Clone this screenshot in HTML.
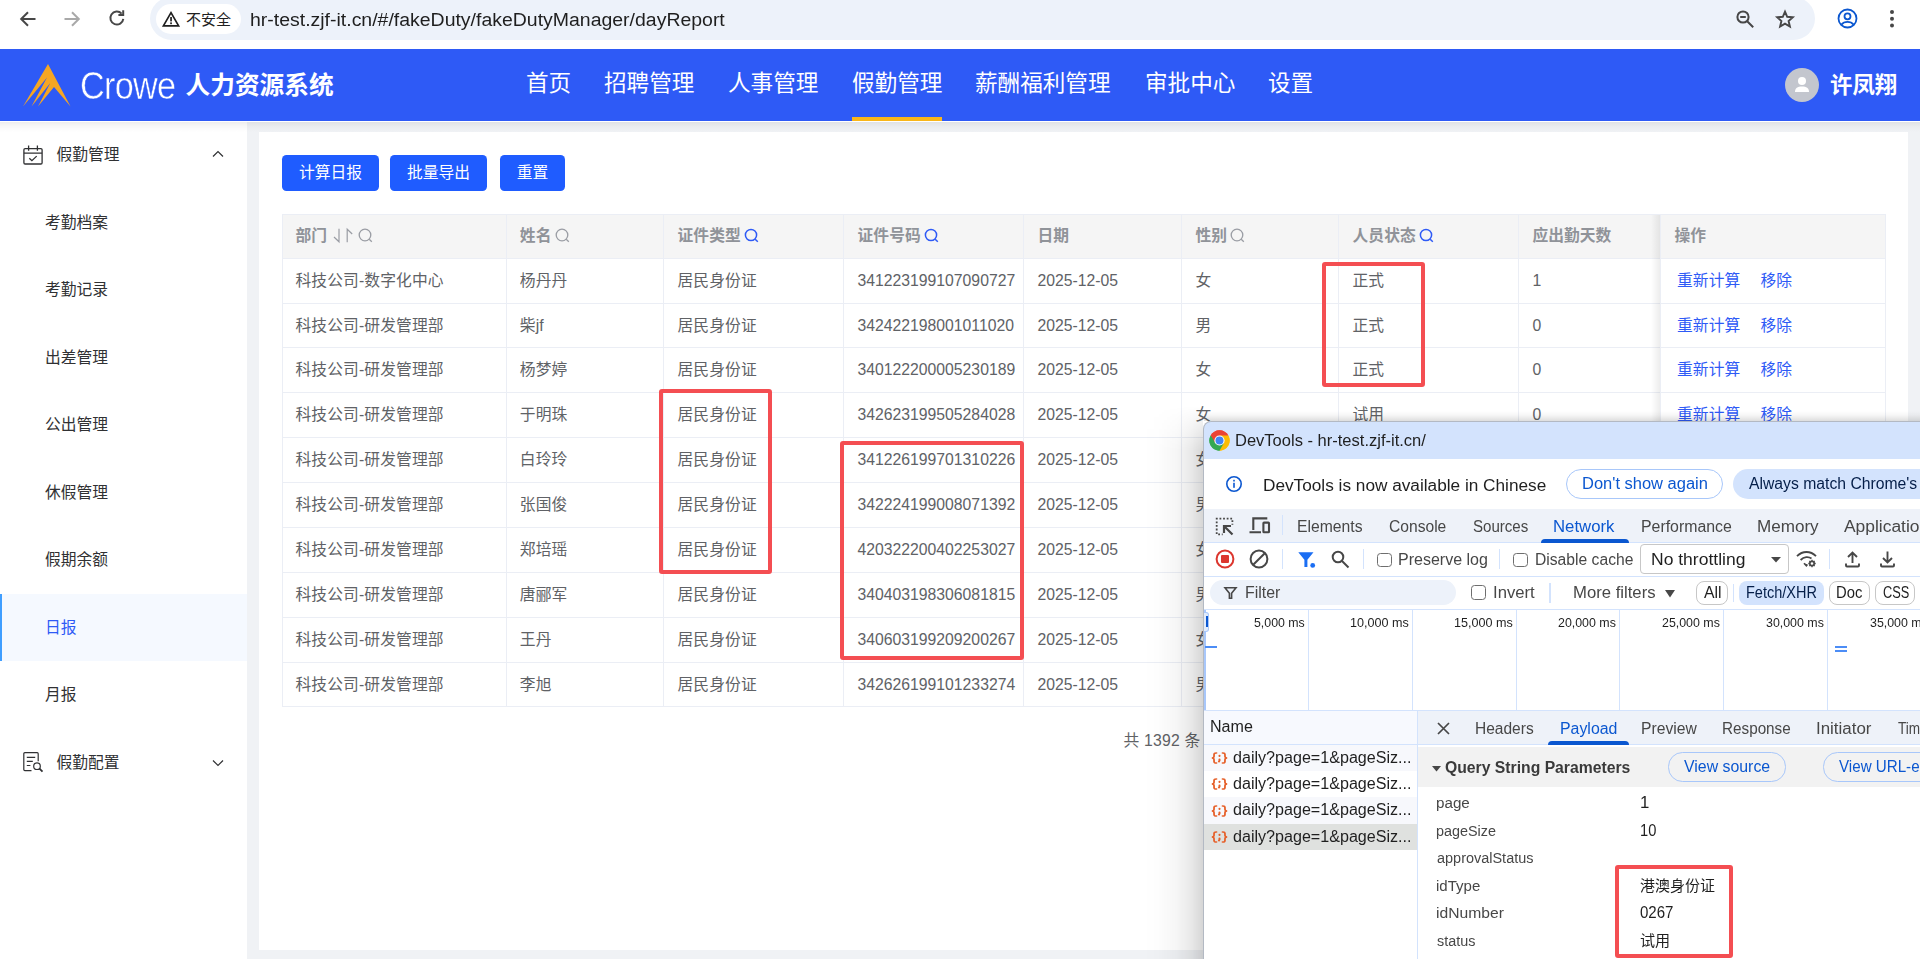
<!DOCTYPE html>
<html lang="zh-CN">
<head>
<meta charset="utf-8">
<title>人力资源系统</title>
<style>
*{box-sizing:border-box;margin:0;padding:0}
html,body{width:1920px;height:959px;overflow:hidden;background:#f0f2f5}
body{position:relative;font-family:"Liberation Sans","Noto Sans CJK SC",sans-serif;color:#303133}
.abs{position:absolute}
svg{display:block;overflow:visible}

/* ---------- browser toolbar ---------- */
#chrome{position:absolute;left:0;top:0;width:1920px;height:49px;background:#fff}
#omni{position:absolute;left:150px;top:-3px;width:1665px;height:43px;border-radius:22px;background:#edf2fa}
#chip{position:absolute;left:156px;top:4px;width:85px;height:30px;border-radius:15px;background:#fff}
#chip span{position:absolute;left:30px;top:0;line-height:31px;font-size:15px;color:#1f1f1f;letter-spacing:0}
#url{position:absolute;left:250px;top:0;line-height:40px;font-size:17.6px;color:#1f1f1f;white-space:nowrap;transform:scaleX(1.106);transform-origin:0 50%}

/* ---------- app header ---------- */
#hdr{position:absolute;left:0;top:49px;width:1920px;height:72px;background:#2e5af6;color:#fff}
#crowe{position:absolute;left:79.5px;top:0;line-height:74px;font-size:38px;letter-spacing:-0.8px;font-weight:400;-webkit-text-stroke:0.5px #2e5af6;transform:scaleX(.9);transform-origin:0 50%}
#sysname{position:absolute;left:185.5px;top:0;line-height:74px;font-size:24.7px;font-weight:700;white-space:nowrap}
.nav{position:absolute;top:0;line-height:70px;font-size:22.6px;white-space:nowrap}
#navline{position:absolute;left:852px;top:68px;width:90px;height:4px;background:#f9b619}
#avatar{position:absolute;left:1785px;top:19px;width:34px;height:34px;border-radius:50%;background:#c3c6ce}
#uname{position:absolute;left:1830px;top:0;line-height:73px;font-size:22.4px;font-weight:700;white-space:nowrap}

/* ---------- sidebar ---------- */
#side{position:absolute;left:0;top:121px;width:247px;height:838px;background:#fff}
.mi{position:absolute;left:0;width:247px;height:67.5px;line-height:67.5px;font-size:15.75px;color:#303133;white-space:nowrap}
.mi.sub{padding-left:45px}
.mi.top{padding-left:56.5px}
.mi.act{background:#f5f9ff;color:#2e5af6;border-left:2px solid #409eff;padding-left:43px}

/* ---------- card + table ---------- */
#card{position:absolute;left:258.75px;top:132.25px;width:1649.5px;height:817.5px;background:#fff}
.btn{position:absolute;top:155px;height:36px;border-radius:4.5px;background:#1f5cff;color:#fff;font-size:15.75px;line-height:36px;text-align:center;white-space:nowrap}
#tbl{position:absolute;left:282px;top:214px;width:1604px;height:493px;border:1px solid #ebeef5;font-size:15.75px;color:#606266}
.tr{position:absolute;left:0;width:1602px;height:44.75px;border-bottom:1px solid #ebeef5;background:#fff}
.tr.th{height:43.75px;background:#f5f5f5;color:#909399;font-weight:700}
.td{letter-spacing:.12px;position:absolute;top:0;height:100%;border-right:1px solid #ebeef5;padding-left:13.5px;line-height:44.5px;white-space:nowrap;overflow:hidden}
.c1{left:0;width:224px;padding-left:12.5px}.c2{left:224px;width:157px;padding-left:12.8px}.c3{left:381px;width:180px}.c4{left:561px;width:180px}
.c5{left:741px;width:158px}.c6{left:899px;width:157px}.c7{left:1056px;width:180px}.c8{left:1236px;width:142px}
.c9{left:1378px;width:224px;border-right:none;padding-left:16px}
.c9 b{font-weight:400;color:#2e5af6;margin-right:20px}
.tr.th .c9{padding-left:13.5px}
.num,.c8{letter-spacing:0;line-height:43px}
.tr.th .td{line-height:41.5px}
#fixsh{position:absolute;left:1651px;top:215px;width:9px;height:491px;background:linear-gradient(to right,rgba(0,0,0,0),rgba(0,0,0,.07))}
.ico{display:inline-block;vertical-align:-2px;margin-left:3px}
#total{position:absolute;left:1123.5px;top:730px;letter-spacing:.2px;font-size:15.75px;color:#606266;line-height:22px;white-space:nowrap}
.red{position:absolute;border:4.5px solid #f44e52;border-radius:3px}

/* ---------- devtools ---------- */
#dtshadow{position:absolute;left:1143px;top:406px;width:60px;height:553px;background:linear-gradient(to right,rgba(0,0,0,0),rgba(0,0,0,.008) 25%,rgba(0,0,0,.035) 55%,rgba(0,0,0,.085) 80%,rgba(0,0,0,.16));-webkit-mask-image:linear-gradient(to bottom,transparent,#000 45px);mask-image:linear-gradient(to bottom,transparent,#000 45px)}
#dtshadow2{position:absolute;left:1204px;top:411px;width:716px;height:10px;background:linear-gradient(to bottom,rgba(0,0,0,0),rgba(0,0,0,.03) 40%,rgba(0,0,0,.13))}
#dt{position:absolute;left:1203px;top:421px;width:717px;height:538px;border-top-left-radius:8px;overflow:hidden;background:#b3b9c3}
#dti{position:absolute;left:1px;top:0;width:716px;height:538px}
#dt .b{position:absolute}
#dtx .t{position:absolute;white-space:nowrap;line-height:20px;transform-origin:0 50%}
.cb{position:absolute;width:14.5px;height:14.5px;border:1.5px solid #6e6e6e;border-radius:3.5px;background:#fff}
.tick{position:absolute;top:610px;width:1px;height:100px;background:#d3e3fd}
.rq{left:1209.5px}
</style>
</head>
<body>

<!-- ================= BROWSER TOOLBAR ================= -->
<div id="chrome">
  <svg class="abs" style="left:18px;top:9px" width="20" height="20" viewBox="0 0 20 20" fill="none" stroke="#474747" stroke-width="2"><path d="M17.5 10H3.5M10 3.2L3.2 10l6.8 6.8"/></svg>
  <svg class="abs" style="left:62px;top:9px" width="20" height="20" viewBox="0 0 20 20" fill="none" stroke="#a9a9a9" stroke-width="2"><path d="M2.5 10h14M10 3.2l6.8 6.8-6.8 6.8"/></svg>
  <svg class="abs" style="left:107px;top:8px" width="20" height="20" viewBox="0 0 20 20" fill="none" stroke="#474747" stroke-width="2"><path d="M16.300 10.800a6.500 6.500 0 1 1-1.700-5.200"/><path d="M16.200 2.200v4.800h-4.800"/></svg>
  <div id="omni"></div>
  <div id="chip">
    <svg class="abs" style="left:6px;top:7px" width="18" height="16" viewBox="0 0 18 16"><path d="M9 1.6L16.6 14.8H1.4z" fill="none" stroke="#1f1f1f" stroke-width="1.7" stroke-linejoin="miter"/><rect x="8.2" y="6" width="1.7" height="4.4" fill="#1f1f1f"/><rect x="8.2" y="11.4" width="1.7" height="1.8" fill="#1f1f1f"/></svg>
    <span>不安全</span>
  </div>
  <div id="url">hr-test.zjf-it.cn/#/fakeDuty/fakeDutyManager/dayReport</div>
  <svg class="abs" style="left:1735px;top:9px" width="20" height="20" viewBox="0 0 20 20" fill="none" stroke="#474747" stroke-width="2"><circle cx="8" cy="8" r="5.6"/><path d="M12.2 12.2l6 6M5.2 8h5.6"/></svg>
  <svg class="abs" style="left:1775px;top:9px" width="20" height="20" viewBox="0 0 20 20" fill="none" stroke="#474747" stroke-width="1.9" stroke-linejoin="miter"><path d="M10 2.6l2.2 5.2 5.6.5-4.2 3.7 1.3 5.5L10 14.6l-4.9 2.9 1.3-5.5-4.2-3.7 5.6-.5z"/></svg>
  <svg class="abs" style="left:1837px;top:8px" width="21" height="21" viewBox="0 0 21 21" fill="none" stroke="#0b57d0" stroke-width="1.8"><circle cx="10.5" cy="10.5" r="9"/><circle cx="10.5" cy="8.3" r="3"/><path d="M4.4 16.6c1.6-2 3.7-2.7 6.1-2.7s4.5.7 6.1 2.7"/></svg>
  <svg class="abs" style="left:1889px;top:9px" width="6" height="20" viewBox="0 0 6 20" fill="#474747"><circle cx="3" cy="3" r="2"/><circle cx="3" cy="9.7" r="2"/><circle cx="3" cy="16.4" r="2"/></svg>
</div>

<!-- ================= APP HEADER ================= -->
<div id="hdr">
  <svg class="abs" style="left:22px;top:14px" width="50" height="45" viewBox="0 0 50 45"><path d="M26 1L1 43.500 25 14.500 9.500 43.500 28.300 20 16 43.500 32 24 48.500 43.500z" fill="#f5a623"/></svg>
  <div id="crowe">Crowe</div>
  <div id="sysname">人力资源系统</div>
  <div class="nav" style="left:526px">首页</div>
  <div class="nav" style="left:604px">招聘管理</div>
  <div class="nav" style="left:728px">人事管理</div>
  <div class="nav" style="left:852px">假勤管理</div>
  <div class="nav" style="left:975px">薪酬福利管理</div>
  <div class="nav" style="left:1145px">审批中心</div>
  <div class="nav" style="left:1268px">设置</div>
  <div id="navline"></div>
  <div id="avatar"><svg class="abs" style="left:9px;top:8px" width="16" height="17" viewBox="0 0 16 17" fill="#fff"><circle cx="8" cy="5" r="4"/><path d="M1 16c0-4 2.5-5.5 7-5.5s7 1.500 7 5.500z"/></svg></div>
  <div id="uname">许凤翔</div>
</div>

<!-- ================= SIDEBAR ================= -->
<div id="side">
  <div class="mi top" style="top:0"><svg class="abs" style="left:23px;top:24px" width="20" height="20" viewBox="0 0 20 20" fill="none" stroke="#303133" stroke-width="1.3"><rect x="0.9" y="3.6" width="18.2" height="15.4" rx="1.2"/><path d="M0.9 8.200h18.2M5.600 0.500v5.200M14.400 0.500v5.200M6.300 13.200l2.600 2.500 4.800-4.600"/></svg>假勤管理<svg class="abs" style="left:212px;top:29px" width="12" height="8" viewBox="0 0 12 8" fill="none" stroke="#303133" stroke-width="1.2"><path d="M1 6.500L6 1.500l5 5"/></svg></div>
  <div class="mi sub" style="top:67.5px">考勤档案</div>
  <div class="mi sub" style="top:135px">考勤记录</div>
  <div class="mi sub" style="top:202.5px">出差管理</div>
  <div class="mi sub" style="top:270px">公出管理</div>
  <div class="mi sub" style="top:337.5px">休假管理</div>
  <div class="mi sub" style="top:405px">假期余额</div>
  <div class="mi sub act" style="top:472.5px">日报</div>
  <div class="mi sub" style="top:540px">月报</div>
  <div class="mi top" style="top:607.5px"><svg class="abs" style="left:23px;top:23px" width="21" height="21" viewBox="0 0 21 21" fill="none" stroke="#303133" stroke-width="1.2"><path d="M8.500 18.600H1.800a1 1 0 0 1-1-1V1.700a1 1 0 0 1 1-1h12.400a1 1 0 0 1 1 1v7.500M3.800 5.300h8.400M3.800 9.400h6M3.800 13.500h3.600"/><circle cx="14" cy="14.200" r="3.300"/><path d="M16.500 16.700l3 3" stroke-width="1.8"/></svg>假勤配置<svg class="abs" style="left:212px;top:30px" width="12" height="8" viewBox="0 0 12 8" fill="none" stroke="#303133" stroke-width="1.2"><path d="M1 1.500l5 5 5-5"/></svg></div>
</div>

<div class="abs" style="left:0;top:121px;width:1920px;height:1px;background:#fff"></div>
<div class="abs" style="left:0;top:122px;width:1920px;height:10px;background:linear-gradient(to bottom,rgba(0,0,0,.065),rgba(0,0,0,.026) 45%,rgba(0,0,0,0))"></div>
<!-- ================= CARD ================= -->
<div id="card"></div>
<div class="btn" style="left:282px;width:97px">计算日报</div>
<div class="btn" style="left:390px;width:97px">批量导出</div>
<div class="btn" style="left:500px;width:65px">重置</div>

<div id="tbl">
  <div class="tr th" style="top:0"><div class="td c1">部门<svg class="ico" style="margin-left:6px;margin-right:2px" width="20" height="15" viewBox="0 0 20 15" fill="none" stroke="#9a9da4" stroke-width="1.2"><path d="M6 0.800v13L1 9M14.200 14.200V1.200l5 4.800"/></svg><svg class="ico" width="15" height="15" viewBox="0 0 15 15" fill="none" stroke="#9a9da4" stroke-width="1.3"><circle cx="7" cy="7" r="5.8"/><path d="M11.2 11.2l2.6 2.6"/></svg></div><div class="td c2">姓名<svg class="ico" width="15" height="15" viewBox="0 0 15 15" fill="none" stroke="#9a9da4" stroke-width="1.3"><circle cx="7" cy="7" r="5.8"/><path d="M11.2 11.2l2.6 2.6"/></svg></div><div class="td c3">证件类型<svg class="ico" width="15" height="15" viewBox="0 0 15 15" fill="none" stroke="#2e5af6" stroke-width="1.5"><circle cx="7" cy="7" r="5.6"/><path d="M11.2 11.2l2.6 2.6"/></svg></div><div class="td c4">证件号码<svg class="ico" width="15" height="15" viewBox="0 0 15 15" fill="none" stroke="#2e5af6" stroke-width="1.5"><circle cx="7" cy="7" r="5.6"/><path d="M11.2 11.2l2.6 2.6"/></svg></div><div class="td c5">日期</div><div class="td c6">性别<svg class="ico" width="15" height="15" viewBox="0 0 15 15" fill="none" stroke="#9a9da4" stroke-width="1.3"><circle cx="7" cy="7" r="5.8"/><path d="M11.2 11.2l2.6 2.6"/></svg></div><div class="td c7">人员状态<svg class="ico" width="15" height="15" viewBox="0 0 15 15" fill="none" stroke="#2e5af6" stroke-width="1.5"><circle cx="7" cy="7" r="5.6"/><path d="M11.2 11.2l2.6 2.6"/></svg></div><div class="td c8">应出勤天数</div><div class="td c9">操作</div></div>
  <div class="tr" style="top:44px;height:45px"><div class="td c1">科技公司-数字化中心</div><div class="td c2">杨丹丹</div><div class="td c3">居民身份证</div><div class="td c4 num">341223199107090727</div><div class="td c5 num">2025-12-05</div><div class="td c6">女</div><div class="td c7">正式</div><div class="td c8">1</div><div class="td c9"><b>重新计算</b><b>移除</b></div></div>
  <div class="tr" style="top:89px;height:44px"><div class="td c1">科技公司-研发管理部</div><div class="td c2">柴jf</div><div class="td c3">居民身份证</div><div class="td c4 num">342422198001011020</div><div class="td c5 num">2025-12-05</div><div class="td c6">男</div><div class="td c7">正式</div><div class="td c8">0</div><div class="td c9"><b>重新计算</b><b>移除</b></div></div>
  <div class="tr" style="top:133px;height:45px"><div class="td c1">科技公司-研发管理部</div><div class="td c2">杨梦婷</div><div class="td c3">居民身份证</div><div class="td c4 num">340122200005230189</div><div class="td c5 num">2025-12-05</div><div class="td c6">女</div><div class="td c7">正式</div><div class="td c8">0</div><div class="td c9"><b>重新计算</b><b>移除</b></div></div>
  <div class="tr" style="top:178px;height:45px"><div class="td c1">科技公司-研发管理部</div><div class="td c2">于明珠</div><div class="td c3">居民身份证</div><div class="td c4 num">342623199505284028</div><div class="td c5 num">2025-12-05</div><div class="td c6">女</div><div class="td c7">试用</div><div class="td c8">0</div><div class="td c9"><b>重新计算</b><b>移除</b></div></div>
  <div class="tr" style="top:223px;height:45px"><div class="td c1">科技公司-研发管理部</div><div class="td c2">白玲玲</div><div class="td c3">居民身份证</div><div class="td c4 num">341226199701310226</div><div class="td c5 num">2025-12-05</div><div class="td c6">女</div><div class="td c7">试用</div><div class="td c8">0</div><div class="td c9"><b>重新计算</b><b>移除</b></div></div>
  <div class="tr" style="top:268px;height:45px"><div class="td c1">科技公司-研发管理部</div><div class="td c2">张国俊</div><div class="td c3">居民身份证</div><div class="td c4 num">342224199008071392</div><div class="td c5 num">2025-12-05</div><div class="td c6">男</div><div class="td c7">试用</div><div class="td c8">0</div><div class="td c9"><b>重新计算</b><b>移除</b></div></div>
  <div class="tr" style="top:313px;height:45px"><div class="td c1">科技公司-研发管理部</div><div class="td c2">郑培瑶</div><div class="td c3">居民身份证</div><div class="td c4 num">420322200402253027</div><div class="td c5 num">2025-12-05</div><div class="td c6">女</div><div class="td c7">试用</div><div class="td c8">0</div><div class="td c9"><b>重新计算</b><b>移除</b></div></div>
  <div class="tr" style="top:358px;height:45px"><div class="td c1">科技公司-研发管理部</div><div class="td c2">唐郦军</div><div class="td c3">居民身份证</div><div class="td c4 num">340403198306081815</div><div class="td c5 num">2025-12-05</div><div class="td c6">男</div><div class="td c7">试用</div><div class="td c8">0</div><div class="td c9"><b>重新计算</b><b>移除</b></div></div>
  <div class="tr" style="top:403px;height:45px"><div class="td c1">科技公司-研发管理部</div><div class="td c2">王丹</div><div class="td c3">居民身份证</div><div class="td c4 num">340603199209200267</div><div class="td c5 num">2025-12-05</div><div class="td c6">女</div><div class="td c7">试用</div><div class="td c8">0</div><div class="td c9"><b>重新计算</b><b>移除</b></div></div>
  <div class="tr" style="top:448px;height:43px;border-bottom:none"><div class="td c1">科技公司-研发管理部</div><div class="td c2">李旭</div><div class="td c3">居民身份证</div><div class="td c4 num">342626199101233274</div><div class="td c5 num">2025-12-05</div><div class="td c6">男</div><div class="td c7">试用</div><div class="td c8">0</div><div class="td c9"><b>重新计算</b><b>移除</b></div></div>
</div>

<div id="fixsh"></div>
<div id="total">共 1392 条</div>

<!-- ================= RED ANNOTATIONS ================= -->
<div class="red" style="left:1322px;top:262px;width:103px;height:125px"></div>
<div class="red" style="left:659px;top:389px;width:113px;height:185px"></div>
<div class="red" style="left:840px;top:441px;width:184px;height:219px"></div>

<!-- DT-BEGIN -->
<!-- ================= DEVTOOLS WINDOW ================= -->
<div id="dtshadow"></div><div id="dtshadow2"></div>
<div id="dt"><div id="dti">
  <div class="b" style="left:0;top:1px;width:716px;height:37px;background:#d3e3fd;border-top-left-radius:7px"></div>
  <div class="b" style="left:0;top:38px;width:716px;height:50px;background:#fff"></div>
  <div class="b" style="left:0;top:88px;width:716px;height:34px;background:#eef2f9;border-bottom:1px solid #d3e3fd"></div>
  <div class="b" style="left:0;top:122px;width:716px;height:34px;background:#fff;border-bottom:1px solid #d3e3fd"></div>
  <div class="b" style="left:0;top:156px;width:716px;height:33px;background:#fff;border-bottom:1px solid #d3e3fd"></div>
  <div class="b" style="left:0;top:189px;width:716px;height:101px;background:#fff;border-bottom:1px solid #d3e3fd"></div>
  <div class="b" style="left:0;top:290px;width:213px;height:34px;background:#f7f9fe;border-bottom:1px solid #d3e3fd"></div>
  <div class="b" style="left:214px;top:290px;width:502px;height:34px;background:#eef2f9;border-bottom:1px solid #d3e3fd"></div>
  <div class="b" style="left:0;top:324px;width:213px;height:214px;background:#fff"></div>
  <div class="b" style="left:0;top:324px;width:213px;height:26.200px;background:#f7f8fc"></div>
  <div class="b" style="left:0;top:376.400px;width:213px;height:26.200px;background:#f7f8fc"></div>
  <div class="b" style="left:0;top:402.600px;width:213px;height:26.400px;background:#dfe1df"></div>
  <div class="b" style="left:213px;top:290px;width:1px;height:248px;background:#d3e3fd"></div>
  <div class="b" style="left:214px;top:324px;width:502px;height:214px;background:#fff"></div>
  <div class="b" style="left:214px;top:326px;width:502px;height:40px;background:#f2f2f2"></div>
</div></div>
<div id="dtx">
  <!-- chrome logo -->
  <svg class="abs" style="left:1208.500px;top:429.500px" width="21" height="21" viewBox="-10.500 -10.500 21 21"><circle r="10.200" fill="#fff"/><path d="M0 0L-8.830 -5.100A10.200 10.200 0 0 1 8.830 -5.100z" fill="#ea4335"/><path d="M0 0L8.830 -5.100A10.200 10.200 0 0 1 0 10.200z" fill="#fbbc04"/><path d="M0 0L0 10.200A10.200 10.200 0 0 1 -8.830 -5.100z" fill="#34a853"/><path d="M-8.830 -5.100L-4.400 2.600 0 0zM8.830 -5.100H0v5.100zM0 10.200l4.400-7.600L0 0z" fill="none"/><path d="M0 -5.100H8.830A10.200 10.200 0 0 0 -8.830 -5.100L-4.420 2.550z" fill="#ea4335"/><path d="M4.420 2.550L0 10.200A10.200 10.200 0 0 0 8.830 -5.100H0z" fill="#fbbc04"/><path d="M-4.420 2.550L-8.830 -5.100A10.200 10.200 0 0 0 0 10.200L4.420 2.550z" fill="#34a853"/><circle r="5.100" fill="#fff"/><circle r="4" fill="#4285f4"/></svg>
  <!-- info icon -->
  <svg class="abs" style="left:1225px;top:475px" width="18" height="18" viewBox="0 0 18 18"><circle cx="9" cy="9" r="7.200" fill="none" stroke="#0b57d0" stroke-width="1.600"/><rect x="8.200" y="7.800" width="1.600" height="5" fill="#0b57d0"/><rect x="8.200" y="4.800" width="1.600" height="1.700" fill="#0b57d0"/></svg>
  <div class="abs" style="left:1566px;top:469px;width:157px;height:30px;border:1px solid #a8c7fa;border-radius:15px"></div>
  <div class="abs" style="left:1733px;top:469px;width:200px;height:30px;background:#d3e3fd;border-radius:15px"></div>
  <!-- inspect icon -->
  <svg class="abs" style="left:1215px;top:516.500px" width="20" height="19" viewBox="0 0 20 19" fill="none" stroke="#474747" stroke-width="1.800" stroke-linejoin="miter"><path d="M0.900 1.700h16.500v6M1.700 0.800v16.500h6" stroke-dasharray="1.800 1.800"/><path d="M9 9l8.500 8.500M9 16V9h7" stroke-width="2.200"/></svg>
  <!-- device icon -->
  <svg class="abs" style="left:1249px;top:517px" width="22" height="17" viewBox="0 0 22 17" fill="none" stroke="#474747" stroke-width="2.100"><path d="M4.300 13V1.400h14M0.500 15.300h11.500"/><rect x="14.400" y="5.600" width="5.600" height="9.700" rx="0.600"/></svg>
  <div class="abs" style="left:1282px;top:515px;width:1px;height:20px;background:#d3e3fd"></div>
  <!-- active tab underline -->
  <div class="abs" style="left:1541px;top:539px;width:88px;height:4px;background:#0b57d0;border-radius:4px 4px 0 0"></div>
  <!-- record -->
  <svg class="abs" style="left:1214.600px;top:549px" width="20" height="20" viewBox="0 0 20 20"><circle cx="10" cy="10" r="8.400" fill="none" stroke="#dc362e" stroke-width="2"/><rect x="6" y="6" width="8" height="8" rx="1" fill="#dc362e"/></svg>
  <!-- clear -->
  <svg class="abs" style="left:1249.200px;top:549px" width="20" height="20" viewBox="0 0 20 20" fill="none" stroke="#474747" stroke-width="2"><circle cx="10" cy="10" r="8.400"/><path d="M4.200 15.800L15.800 4.200"/></svg>
  <div class="abs" style="left:1282px;top:549px;width:1px;height:20px;background:#d3e3fd"></div>
  <!-- filter filled -->
  <svg class="abs" style="left:1297.500px;top:551.800px" width="19" height="17" viewBox="0 0 19 17"><path d="M0.300 0.300h15.200L9.400 7.800v7.200H6.400V7.800z" fill="#1b6ef3"/><circle cx="14.700" cy="13.400" r="2.400" fill="#1b6ef3"/></svg>
  <!-- search -->
  <svg class="abs" style="left:1331px;top:550px" width="19" height="19" viewBox="0 0 19 19" fill="none" stroke="#474747" stroke-width="2"><circle cx="7" cy="7" r="5.300"/><path d="M11 11l6.500 6.500"/></svg>
  <div class="abs" style="left:1363px;top:549px;width:1px;height:20px;background:#d3e3fd"></div>
  <div class="cb" style="left:1377px;top:552.500px"></div>
  <div class="abs" style="left:1499px;top:549px;width:1px;height:20px;background:#d3e3fd"></div>
  <div class="cb" style="left:1513px;top:552.500px"></div>
  <!-- throttle select -->
  <div class="abs" style="left:1640px;top:544px;width:149px;height:30px;border:1px solid #c7c7c7;border-radius:4px;background:#fff"></div>
  <svg class="abs" style="left:1771px;top:557px" width="10" height="6" viewBox="0 0 10 6"><path d="M0 0h10L5 5.500z" fill="#474747"/></svg>
  <!-- wifi settings -->
  <svg class="abs" style="left:1796px;top:550px" width="22" height="18" viewBox="0 0 22 18" fill="none" stroke="#474747" stroke-width="1.800"><path d="M1 6.200C6.500 0.600 14.500 0.600 20 6.200M4.600 10C8 6.500 12.600 6.400 15.500 8.500"/><path d="M8 13.200l2.400 2.600 1-1.200" stroke-width="1.600" fill="#474747"/><circle cx="16" cy="13.500" r="2.200" stroke-width="1.700"/><path d="M16 9.800v1.200M16 16v1.200M12.300 13.500h1.200M18.500 13.500h1.200M13.400 10.900l.9.900M17.700 15.200l.9.900M18.600 10.900l-.9.900M14.300 15.200l-.9.900" stroke-width="1.300"/></svg>
  <div class="abs" style="left:1829px;top:549px;width:1px;height:20px;background:#d3e3fd"></div>
  <!-- upload / download -->
  <svg class="abs" style="left:1845px;top:550.500px" width="15" height="16.500" viewBox="0 0 15 16.500" fill="none" stroke="#474747" stroke-width="1.900"><path d="M7.500 12V1.500M3 6l4.500-4.500L12 6M1 12.500v2a1 1 0 0 0 1 1h11a1 1 0 0 0 1-1v-2"/></svg>
  <svg class="abs" style="left:1880px;top:550.500px" width="15" height="16.500" viewBox="0 0 15 16.500" fill="none" stroke="#474747" stroke-width="1.900"><path d="M7.500 0.500V11.500M3 7l4.500 4.500L12 7M1 12.500v2a1 1 0 0 0 1 1h11a1 1 0 0 0 1-1v-2"/></svg>
  <!-- filter row -->
  <div class="abs" style="left:1210px;top:580px;width:246px;height:25px;background:#edf2fa;border-radius:12.500px"></div>
  <svg class="abs" style="left:1223.500px;top:587px" width="13" height="12" viewBox="0 0 13 12" fill="none" stroke="#474747" stroke-width="1.600"><path d="M1 0.800h11L7.600 6.300v5H5.400v-5z"/></svg>
  <div class="cb" style="left:1471px;top:585px"></div>
  <div class="abs" style="left:1549px;top:583px;width:2px;height:20px;background:#d3e3fd"></div>
  <svg class="abs" style="left:1664.500px;top:589.500px" width="10" height="8" viewBox="0 0 10 8"><path d="M0 0h10L5 7.500z" fill="#474747"/></svg>
  <div class="abs" style="left:1696px;top:581px;width:32px;height:24px;border:1px solid #c7c7c7;border-radius:8px"></div>
  <div class="abs" style="left:1733px;top:584px;width:1px;height:18px;background:#d3e3fd"></div>
  <div class="abs" style="left:1739px;top:581px;width:85px;height:24px;background:#d3e3fd;border-radius:8px"></div>
  <div class="abs" style="left:1829px;top:581px;width:41px;height:24px;border:1px solid #c7c7c7;border-radius:8px"></div>
  <div class="abs" style="left:1875px;top:581px;width:40px;height:24px;border:1px solid #c7c7c7;border-radius:8px"></div>
  <!-- timeline -->
  <div class="abs" style="left:1204px;top:610px;width:2px;height:100px;background:#a8c7fa"></div>
  <div class="tick" style="left:1308.200px"></div><div class="tick" style="left:1412.100px"></div><div class="tick" style="left:1515.700px"></div><div class="tick" style="left:1619.200px"></div><div class="tick" style="left:1722.900px"></div><div class="tick" style="left:1826.800px"></div>
  <div class="abs" style="left:1204px;top:612px;width:5px;height:20px;background:#e1ebfb;border:1px solid #a8c7fa;border-left:none;border-radius:0 3px 3px 0"></div>
  <div class="abs" style="left:1206px;top:616px;width:1.500px;height:11px;background:#0b57d0"></div>
  <div class="abs" style="left:1205px;top:646px;width:12px;height:2px;background:#4c8df6"></div>
  <div class="abs" style="left:1835px;top:645.500px;width:12px;height:2px;background:#4c8df6"></div>
  <div class="abs" style="left:1835px;top:649.500px;width:12px;height:2px;background:#4c8df6"></div>
  <!-- payload tab underline + close -->
  <div class="abs" style="left:1548px;top:741px;width:81px;height:4px;background:#0b57d0;border-radius:4px 4px 0 0"></div>
  <svg class="abs" style="left:1437px;top:721.500px" width="13" height="13" viewBox="0 0 13 13" fill="none" stroke="#474747" stroke-width="1.700"><path d="M1 1l11 11M12 1L1 12"/></svg>
  <!-- request icons -->
  <svg class="abs rq" style="top:752.2px" width="19" height="12" viewBox="0 0 16 12" preserveAspectRatio="none"><g fill="none" stroke="#e6602a" stroke-width="1.500" stroke-linecap="round"><path d="M5.500 0.900H5.100a1.700 1.700 0 0 0-1.700 1.700v1.700c0 1-.7 1.700-1.900 1.700 1.200 0 1.900.7 1.900 1.700v1.700a1.700 1.700 0 0 0 1.700 1.700h.4M10.500 0.900h.4a1.700 1.700 0 0 1 1.700 1.700v1.700c0 1 .7 1.700 1.900 1.700-1.200 0-1.900.7-1.900 1.700v1.700a1.700 1.700 0 0 1-1.700 1.700h-.4"/><path d="M8 3.600v.5M8 7.300v1.300l-.5 1" stroke-width="1.700"/></g></svg>
  <svg class="abs rq" style="top:778.4px" width="19" height="12" viewBox="0 0 16 12" preserveAspectRatio="none"><g fill="none" stroke="#e6602a" stroke-width="1.500" stroke-linecap="round"><path d="M5.500 0.900H5.100a1.700 1.700 0 0 0-1.700 1.700v1.700c0 1-.7 1.700-1.900 1.700 1.200 0 1.900.7 1.900 1.700v1.700a1.700 1.700 0 0 0 1.700 1.700h.4M10.500 0.900h.4a1.700 1.700 0 0 1 1.700 1.700v1.700c0 1 .7 1.700 1.900 1.700-1.200 0-1.900.7-1.900 1.700v1.700a1.700 1.700 0 0 1-1.700 1.700h-.4"/><path d="M8 3.600v.5M8 7.300v1.300l-.5 1" stroke-width="1.700"/></g></svg>
  <svg class="abs rq" style="top:804.6px" width="19" height="12" viewBox="0 0 16 12" preserveAspectRatio="none"><g fill="none" stroke="#e6602a" stroke-width="1.500" stroke-linecap="round"><path d="M5.500 0.900H5.100a1.700 1.700 0 0 0-1.700 1.700v1.700c0 1-.7 1.700-1.900 1.700 1.200 0 1.900.7 1.900 1.700v1.700a1.700 1.700 0 0 0 1.700 1.700h.4M10.500 0.900h.4a1.700 1.700 0 0 1 1.700 1.700v1.700c0 1 .7 1.700 1.900 1.700-1.200 0-1.900.7-1.900 1.700v1.700a1.700 1.700 0 0 1-1.700 1.700h-.4"/><path d="M8 3.600v.5M8 7.300v1.300l-.5 1" stroke-width="1.700"/></g></svg>
  <svg class="abs rq" style="top:830.9px" width="19" height="12" viewBox="0 0 16 12" preserveAspectRatio="none"><g fill="none" stroke="#e6602a" stroke-width="1.500" stroke-linecap="round"><path d="M5.500 0.900H5.100a1.700 1.700 0 0 0-1.700 1.700v1.700c0 1-.7 1.700-1.900 1.700 1.200 0 1.900.7 1.900 1.700v1.700a1.700 1.700 0 0 0 1.700 1.700h.4M10.500 0.900h.4a1.700 1.700 0 0 1 1.700 1.700v1.700c0 1 .7 1.700 1.900 1.700-1.200 0-1.900.7-1.900 1.700v1.700a1.700 1.700 0 0 1-1.700 1.700h-.4"/><path d="M8 3.600v.5M8 7.300v1.300l-.5 1" stroke-width="1.700"/></g></svg>
    <!-- section header -->
  <svg class="abs" style="left:1432px;top:765.500px" width="9" height="6" viewBox="0 0 9 6"><path d="M0 0h9L4.500 5.500z" fill="#474747"/></svg>
  <div class="abs" style="left:1668px;top:752px;width:118px;height:30px;border:1px solid #a8c7fa;border-radius:14.500px"></div>
  <div class="abs" style="left:1823px;top:752px;width:150px;height:30px;border:1px solid #a8c7fa;border-radius:14.500px"></div>
<div class="t" style="left:1234.7px;top:431.2px;font-size:16px;color:#1f1f1f;transform:scaleX(1.032)">DevTools - hr-test.zjf-it.cn/</div>
<div class="t" style="left:1263.1px;top:475.7px;font-size:16px;color:#1f1f1f;transform:scaleX(1.076)">DevTools is now available in Chinese</div>
<div class="t" style="left:1582.0px;top:474.0px;font-size:16px;color:#0b57d0;transform:scaleX(1.030)">Don&#x27;t show again</div>
<div class="t" style="left:1748.5px;top:474.0px;font-size:16px;color:#041e49;transform:scaleX(0.983)">Always match Chrome&#x27;s language</div>
<div class="t" style="left:1297.0px;top:517.0px;font-size:16px;color:#474747;transform:scaleX(0.982)">Elements</div>
<div class="t" style="left:1389.0px;top:517.0px;font-size:16px;color:#474747;transform:scaleX(0.976)">Console</div>
<div class="t" style="left:1473.0px;top:517.0px;font-size:16px;color:#474747;transform:scaleX(0.942)">Sources</div>
<div class="t" style="left:1553.2px;top:517.0px;font-size:16px;color:#0b57d0;transform:scaleX(1.046)">Network</div>
<div class="t" style="left:1641.3px;top:517.0px;font-size:16px;color:#474747;transform:scaleX(0.992)">Performance</div>
<div class="t" style="left:1756.9px;top:517.0px;font-size:16px;color:#474747;transform:scaleX(1.067)">Memory</div>
<div class="t" style="left:1844.4px;top:517.0px;font-size:16px;color:#474747;transform:scaleX(1.088)">Application</div>
<div class="t" style="left:1398.3px;top:549.5px;font-size:16px;color:#474747;transform:scaleX(1.001)">Preserve log</div>
<div class="t" style="left:1535.0px;top:549.5px;font-size:16px;color:#474747;transform:scaleX(0.979)">Disable cache</div>
<div class="t" style="left:1650.6px;top:549.5px;font-size:16px;color:#1f1f1f;transform:scaleX(1.094)">No throttling</div>
<div class="t" style="left:1244.8px;top:582.5px;font-size:16px;color:#474747;transform:scaleX(0.994)">Filter</div>
<div class="t" style="left:1493.3px;top:582.5px;font-size:16px;color:#474747;transform:scaleX(1.041)">Invert</div>
<div class="t" style="left:1572.5px;top:582.5px;font-size:16px;color:#474747;transform:scaleX(1.043)">More filters</div>
<div class="t" style="left:1703.5px;top:583.0px;font-size:16px;color:#1f1f1f;transform:scaleX(0.987)">All</div>
<div class="t" style="left:1745.6px;top:583.0px;font-size:16px;color:#041e49;transform:scaleX(0.906)">Fetch/XHR</div>
<div class="t" style="left:1835.7px;top:583.0px;font-size:16px;color:#1f1f1f;transform:scaleX(0.925)">Doc</div>
<div class="t" style="left:1882.6px;top:583.0px;font-size:16px;color:#1f1f1f;transform:scaleX(0.800)">CSS</div>
<div class="t" style="left:1209.5px;top:717.0px;font-size:16px;color:#1f1f1f;transform:scaleX(1.005)">Name</div>
<div class="t" style="left:1475.3px;top:718.5px;font-size:16px;color:#474747;transform:scaleX(0.970)">Headers</div>
<div class="t" style="left:1559.7px;top:718.5px;font-size:16px;color:#0b57d0;transform:scaleX(0.992)">Payload</div>
<div class="t" style="left:1641.0px;top:718.5px;font-size:16px;color:#474747;transform:scaleX(0.980)">Preview</div>
<div class="t" style="left:1722.4px;top:718.5px;font-size:16px;color:#474747;transform:scaleX(0.954)">Response</div>
<div class="t" style="left:1816.1px;top:718.5px;font-size:16px;color:#474747;transform:scaleX(1.057)">Initiator</div>
<div class="t" style="left:1898.2px;top:718.5px;font-size:16px;color:#474747;transform:scaleX(0.847)">Timing</div>
<div class="t" style="left:1444.5px;top:758.0px;font-size:16px;color:#3a3a3a;transform:scaleX(0.983);font-weight:700">Query String Parameters</div>
<div class="t" style="left:1683.7px;top:757.0px;font-size:16px;color:#0b57d0;transform:scaleX(0.992)">View source</div>
<div class="t" style="left:1839.3px;top:757.0px;font-size:16px;color:#0b57d0;transform:scaleX(0.947)">View URL-encoded</div>
<div class="t" style="left:1436.0px;top:792.6px;font-size:15.5px;color:#474747;transform:scaleX(0.980)">page</div>
<div class="t" style="left:1436.1px;top:820.7px;font-size:15.5px;color:#474747;transform:scaleX(0.928)">pageSize</div>
<div class="t" style="left:1437.0px;top:847.7px;font-size:15.5px;color:#474747;transform:scaleX(0.933)">approvalStatus</div>
<div class="t" style="left:1436.0px;top:875.5px;font-size:15.5px;color:#474747;transform:scaleX(0.969)">idType</div>
<div class="t" style="left:1436.0px;top:902.5px;font-size:15.5px;color:#474747;transform:scaleX(1.010)">idNumber</div>
<div class="t" style="left:1437.0px;top:930.6px;font-size:15.5px;color:#474747;transform:scaleX(0.928)">status</div>
<div class="t" style="left:1640.0px;top:792.6px;font-size:16px;color:#1f1f1f;transform:scaleX(1.050)">1</div>
<div class="t" style="left:1640.1px;top:820.7px;font-size:16px;color:#1f1f1f;transform:scaleX(0.917)">10</div>
<div class="t" style="left:1639.5px;top:875.8px;font-size:15px;color:#1f1f1f;transform:scaleX(0.999)">港澳身份证</div>
<div class="t" style="left:1640.0px;top:902.5px;font-size:16px;color:#1f1f1f;transform:scaleX(0.941)">0267</div>
<div class="t" style="left:1639.5px;top:930.9px;font-size:15px;color:#1f1f1f;transform:scaleX(1.007)">试用</div>
<div class="t" style="left:1233.0px;top:747.8px;font-size:16px;color:#1f1f1f;transform:scaleX(1.006)">daily?page=1&amp;pageSiz...</div>
<div class="t" style="left:1233.0px;top:774.0px;font-size:16px;color:#1f1f1f;transform:scaleX(1.006)">daily?page=1&amp;pageSiz...</div>
<div class="t" style="left:1233.0px;top:800.2px;font-size:16px;color:#1f1f1f;transform:scaleX(1.006)">daily?page=1&amp;pageSiz...</div>
<div class="t" style="left:1233.0px;top:826.5px;font-size:16px;color:#1f1f1f;transform:scaleX(1.006)">daily?page=1&amp;pageSiz...</div>
<div class="t" style="left:1254.4px;top:612.5px;font-size:13.5px;color:#1f1f1f;transform:scaleX(0.914)">5,000 ms</div>
<div class="t" style="left:1350.3px;top:612.5px;font-size:13.5px;color:#1f1f1f;transform:scaleX(0.933)">10,000 ms</div>
<div class="t" style="left:1453.9px;top:612.5px;font-size:13.5px;color:#1f1f1f;transform:scaleX(0.933)">15,000 ms</div>
<div class="t" style="left:1558.3px;top:612.5px;font-size:13.5px;color:#1f1f1f;transform:scaleX(0.918)">20,000 ms</div>
<div class="t" style="left:1662.0px;top:612.5px;font-size:13.5px;color:#1f1f1f;transform:scaleX(0.918)">25,000 ms</div>
<div class="t" style="left:1765.9px;top:612.5px;font-size:13.5px;color:#1f1f1f;transform:scaleX(0.918)">30,000 ms</div>
<div class="t" style="left:1869.8px;top:612.5px;font-size:13.5px;color:#1f1f1f;transform:scaleX(0.918)">35,000 ms</div>
  <div class="red" style="left:1615px;top:864.500px;width:118px;height:93px"></div>
</div>
<!-- DT-END -->

</body>
</html>
